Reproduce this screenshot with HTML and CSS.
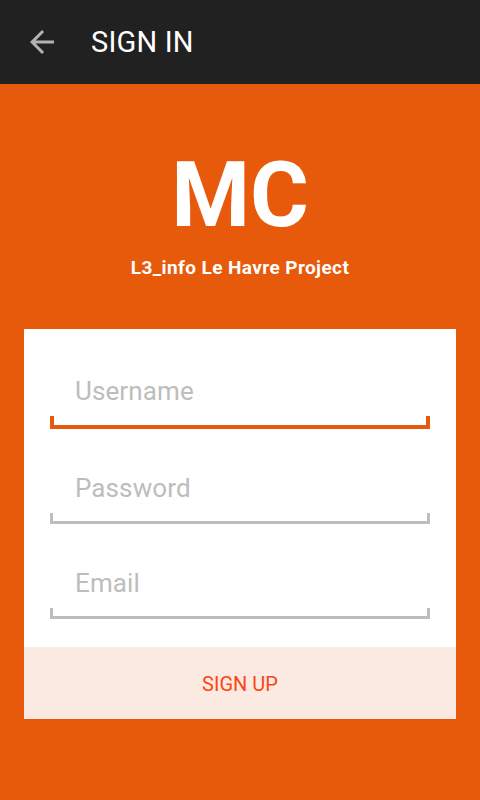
FILE: index.html
```html
<!DOCTYPE html>
<html lang="en">
<head>
<meta charset="utf-8">
<title>Sign in</title>
<link rel="stylesheet" href="styles.css">
</head>
<body>
<header class="appbar">
  <svg class="back" viewBox="0 0 24 24" width="36" height="36" aria-hidden="true">
    <path d="M20 11H7.83l5.59-5.59L12 4l-8 8 8 8 1.41-1.41L7.83 13H20v-2z" fill="#b3b3b3"/>
  </svg>
  <h1 class="title">SIGN IN</h1>
</header>
<main class="main">
  <div class="brand">MC</div>
  <div class="subtitle">L3_info Le Havre Project</div>
  <section class="card">
    <div class="fields">
      <div class="field focused">
        <div class="label">Username</div>
        <div class="line"></div>
      </div>
      <div class="field">
        <div class="label">Password</div>
        <div class="line"></div>
      </div>
      <div class="field">
        <div class="label">Email</div>
        <div class="line"></div>
      </div>
    </div>
    <div class="signup">SIGN UP</div>
  </section>
</main>
</body>
</html>
```

FILE: styles.css
```css
* { box-sizing: border-box; }
html, body { margin: 0; padding: 0; }
body {
  font-family: Roboto, "Noto Sans", sans-serif;
  background: #e75a0c;
  width: 480px;
  min-height: 800px;
}
.appbar {
  height: 84px;
  background: #212121;
  display: flex;
  align-items: center;
  padding-left: 24px;
}
.back { display: block; flex: none; }
.title {
  margin: 0 0 0 31px;
  font-size: 29px;
  line-height: 28px;
  font-weight: 400;
  color: #ffffff;
  letter-spacing: 0.2px;
}
.main {
  background: #e75a0c;
  min-height: 716px;
  padding-top: 67px;
  display: flex;
  flex-direction: column;
  align-items: center;
}
.brand {
  font-size: 90px;
  line-height: 90px;
  font-weight: 700;
  color: #ffffff;
}
.subtitle {
  margin-top: 17px;
  font-size: 19px;
  line-height: 19px;
  font-weight: 700;
  color: #ffffff;
  letter-spacing: 0.4px;
}
.card {
  margin-top: 52px;
  width: 432px;
  background: #ffffff;
}
.fields {
  padding: 47px 26px 28px;
  display: flex;
  flex-direction: column;
  gap: 44px;
}
.label {
  padding-left: 25px;
  font-size: 26px;
  line-height: 30px;
  color: #bdbdbd;
  letter-spacing: 0.1px;
}
.line {
  margin-top: 10px;
  height: 11px;
  border: 3px solid #bdbdbd;
  border-top: none;
}
.focused .line {
  height: 13px;
  border-width: 0 4px 4px 4px;
  border-color: #e75a0c;
}
.signup {
  height: 72px;
  line-height: 74px;
  text-align: center;
  background: #fbeae2;
  color: #fa4616;
  font-size: 20px;
}
```
